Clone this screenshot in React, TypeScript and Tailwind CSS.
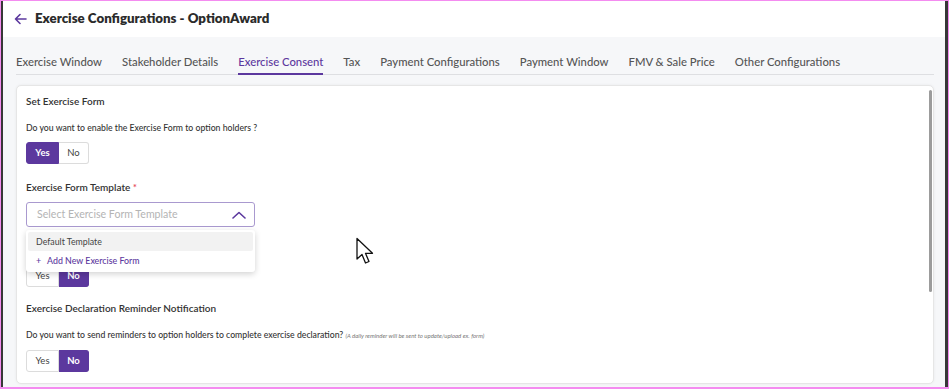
import React from 'react';

const tabs = [
  'Exercise Window',
  'Stakeholder Details',
  'Exercise Consent',
  'Tax',
  'Payment Configurations',
  'Payment Window',
  'FMV & Sale Price',
  'Other Configurations',
];

const YesNo: React.FC<{ value: 'yes' | 'no' }> = ({ value }) => {
  const on = 'bg-[#5c389e] text-white font-bold border-[#5c389e]';
  const off = 'bg-white text-[#444] border-[#dcdcdc]';
  return (
    <div className="flex h-[22px] text-[9.5px]">
      <button className={`w-[33px] rounded-l-[3px] border ${value === 'yes' ? on : off}`}>Yes</button>
      <button className={`w-[30px] rounded-r-[3px] border border-l-0 ${value === 'no' ? on : off}`}>No</button>
    </div>
  );
};

export default function App() {
  return (
    <div
      className="w-[949px] h-[389px] overflow-hidden border-t border-b-2 border-x border-[#f48cf0]"
      style={{ fontFamily: 'Lato, "Noto Sans", sans-serif' }}
    >
      <div className="relative flex h-full flex-col overflow-hidden border-l-2 border-r-[3px] border-[#383838] bg-[#f6f7f9]">
        {/* header */}
        <div className="flex h-[36px] shrink-0 items-center gap-[8px] bg-white pl-[11px]">
          <svg width="13" height="12" viewBox="0 0 13 12" fill="none" stroke="#5c389e" strokeWidth="1.6" strokeLinecap="round" strokeLinejoin="round">
            <path d="M12 6H1.5M6 1.5L1.5 6L6 10.5" />
          </svg>
          <h1 className="text-[13.3px] font-extrabold text-[#2b2b2b]">Exercise Configurations - OptionAward</h1>
        </div>

        {/* tabs */}
        <div className="ml-[13px] mr-[11px] mt-[17px] flex gap-[20px] border-b border-[#dedfe2]">
          {tabs.map((t) => (
            <div
              key={t}
              className={`-mb-px shrink-0 whitespace-nowrap pb-[3px] text-[11.3px] leading-[16px] font-medium ${
                t === 'Exercise Consent'
                  ? 'border-b-2 border-[#5c389e] text-[#5c389e]'
                  : 'border-b-2 border-transparent text-[#555]'
              }`}
            >
              {t}
            </div>
          ))}
        </div>

        {/* card */}
        <div className="relative ml-[13px] mr-[11px] mt-[10px] h-[299px] shrink-0 overflow-hidden rounded-[5px] border border-[#e6e6e6] bg-white shadow-[0_0_3px_rgba(0,0,0,0.06)]">
          <div className="px-[9px] pt-[8px] text-[#333]">
            <div className="text-[10px] leading-[14px] font-semibold">Set Exercise Form</div>
            <div className="mt-[13px] text-[8.7px] leading-[13px] font-medium">
              Do you want to enable the Exercise Form to option holders ?
            </div>
            <div className="mt-[8px]">
              <YesNo value="yes" />
            </div>

            <div className="mt-[17px] text-[10px] leading-[13px] font-semibold">
              Exercise Form Template <span className="text-[#e5475b]">*</span>
            </div>
            <div className="relative mt-[8px] w-[229px]">
              <div className="flex h-[25px] items-center justify-between rounded-[3px] border border-[#a999cf] pl-[10px] pr-[8px]">
                <span className="text-[10.6px] text-[#b4b4b4]">Select Exercise Form Template</span>
                <svg width="14" height="8" viewBox="0 0 14 8" fill="none" stroke="#5c389e" strokeWidth="1.6" strokeLinecap="round" strokeLinejoin="round">
                  <path d="M1 7L7 1.5L13 7" />
                </svg>
              </div>
              <div className="absolute left-0 top-[28px] z-10 w-[229px] rounded-[3px] bg-white py-[2px] shadow-[0_2px_6px_rgba(0,0,0,0.18)]">
                <div className="mx-[2px] flex h-[19px] items-center rounded-[2px] bg-[#f2f2f2] pl-[8px] text-[8.8px] text-[#444]">
                  Default Template
                </div>
                <div className="flex h-[19px] items-center gap-[6px] pl-[10px] text-[8.8px] font-medium text-[#5c389e]">
                  <span>+</span>
                  <span>Add New Exercise Form</span>
                </div>
              </div>
            </div>

            <div className="mt-[38px]">
              <YesNo value="no" />
            </div>

            <div className="mt-[14px] text-[10px] leading-[14px] font-semibold">
              Exercise Declaration Reminder Notification
            </div>
            <div className="mt-[13px] text-[8.7px] leading-[13px] font-medium">
              Do you want to send reminders to option holders to complete exercise declaration?{' '}
              <span className="text-[6px] italic font-normal text-[#777]">
                (A daily reminder will be sent to update/upload ex. form)
              </span>
            </div>
            <div className="mt-[8px]">
              <YesNo value="no" />
            </div>
          </div>

          {/* scrollbar */}
          <div className="absolute right-[1px] top-[4px] h-[202px] w-[3px] rounded-full bg-[#9c9c9c]" />
        </div>

        {/* mouse cursor */}
        <svg className="absolute left-[352px] top-[236px]" width="20" height="28" viewBox="0 0 20 28">
          <path d="M2 1.5V22L7 17.5L10.5 26L14 24.5L10.5 16.3H17.5Z" fill="white" stroke="#111" strokeWidth="1.3" strokeLinejoin="round" />
        </svg>
      </div>
    </div>
  );
}
